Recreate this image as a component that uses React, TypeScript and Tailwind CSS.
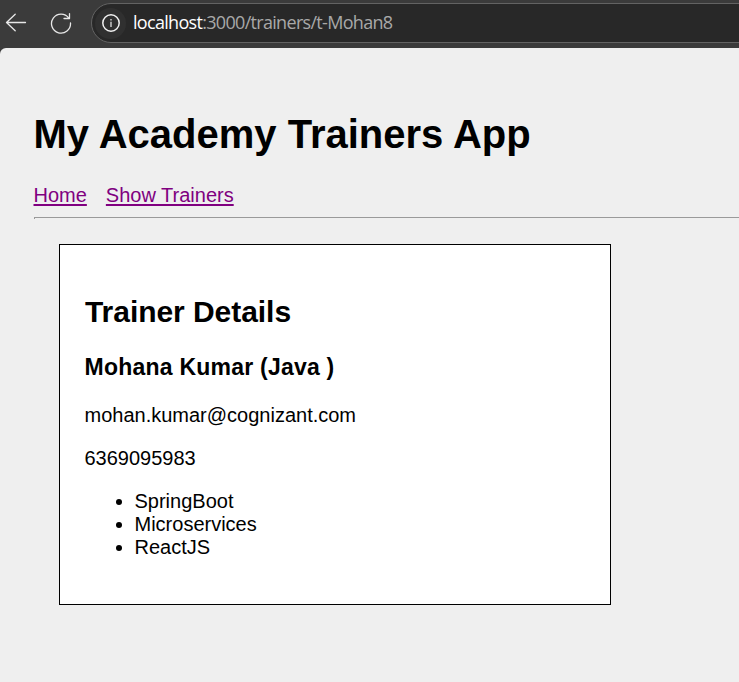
export default function App() {
  return (
    <div className="flex h-[682px] w-[739px] flex-col overflow-hidden bg-[#3b3b3b] font-['Liberation_Sans',Arial,sans-serif] text-black">
      <header className="flex h-12 shrink-0 items-start pl-[5px]">
        <svg className="mt-[12px] h-[22px] w-[22px] shrink-0" viewBox="0 0 22 22" fill="none" stroke="#e8e8e8" strokeWidth="1.3" strokeLinecap="round" strokeLinejoin="round">
          <path d="M20.5 10.5H1.5M10.2 2.2L1.5 10.5L10.2 18.8" />
        </svg>
        <svg className="ml-[23px] mt-[12px] h-[22px] w-[22px] shrink-0" viewBox="0 0 22 22" fill="none" stroke="#e8e8e8" strokeWidth="1.3" strokeLinecap="round" strokeLinejoin="round">
          <path d="M18.8 6.2A9.5 9.5 0 1 0 20.5 11M19.5 1.6V6.5H14" />
        </svg>
        <div className="ml-[19px] mt-[3px] flex h-10 w-[700px] shrink-0 items-center rounded-full border border-[#636363] bg-[#282828] pl-[3px]">
          <span className="flex size-[31px] items-center justify-center rounded-full bg-[#303030]">
            <svg className="size-[18px]" viewBox="0 0 18 18" fill="none" stroke="#f0f0f0" strokeWidth="1.5">
              <circle cx="9" cy="9" r="8.2" />
              <path d="M9 7.8V13M9 5V6.6" stroke="#c0c0c0" strokeWidth="1.6" />
            </svg>
          </span>
          <span className="-mt-[2px] ml-[7px] whitespace-nowrap font-['Open_Sans',sans-serif] text-[18px] leading-6 tracking-[-0.69px] text-[#a8a8a8]"><span className="text-white">localhost</span>:3000/trainers/t-Mohan8</span>
        </div>
      </header>
      <main className="flex grow flex-col rounded-tl-[6px] bg-[#efefef] pl-[33.5px] pt-[62px]">
        <h1 className="h-[48px] whitespace-nowrap text-[40px] font-bold leading-[48px]">My Academy Trainers App</h1>
        <nav className="mt-[25px] flex h-[24px] gap-[19px] text-[20px] leading-[24px] text-[#800080]">
          <a className="underline decoration-2 underline-offset-2">Home</a>
          <a className="underline decoration-2 underline-offset-2">Show Trainers</a>
        </nav>
        <hr className="ml-[0.5px] mt-[10px] h-[2px] border-l border-t border-[#9a9a9a]" />
        <section className="ml-[25.5px] mt-[25px] h-[361px] w-[552px] border border-black bg-white pl-[24.5px] text-[20px] leading-[23px]">
          <h2 className="ml-[0.5px] mt-[50px] text-[30px] font-bold leading-[34px] tracking-[-0.05px]">Trainer Details</h2>
          <h3 className="mt-[25px] text-[23px] font-bold leading-[26px] tracking-[0.23px]">Mohana Kumar (Java )</h3>
          <p className="mt-[24px]">mohan.kumar@cognizant.com</p>
          <p className="mt-[20px]">6369095983</p>
          <ul className="mt-[20px] list-disc pl-[50px]">
            <li>SpringBoot</li>
            <li>Microservices</li>
            <li>ReactJS</li>
          </ul>
        </section>
      </main>
    </div>
  );
}
